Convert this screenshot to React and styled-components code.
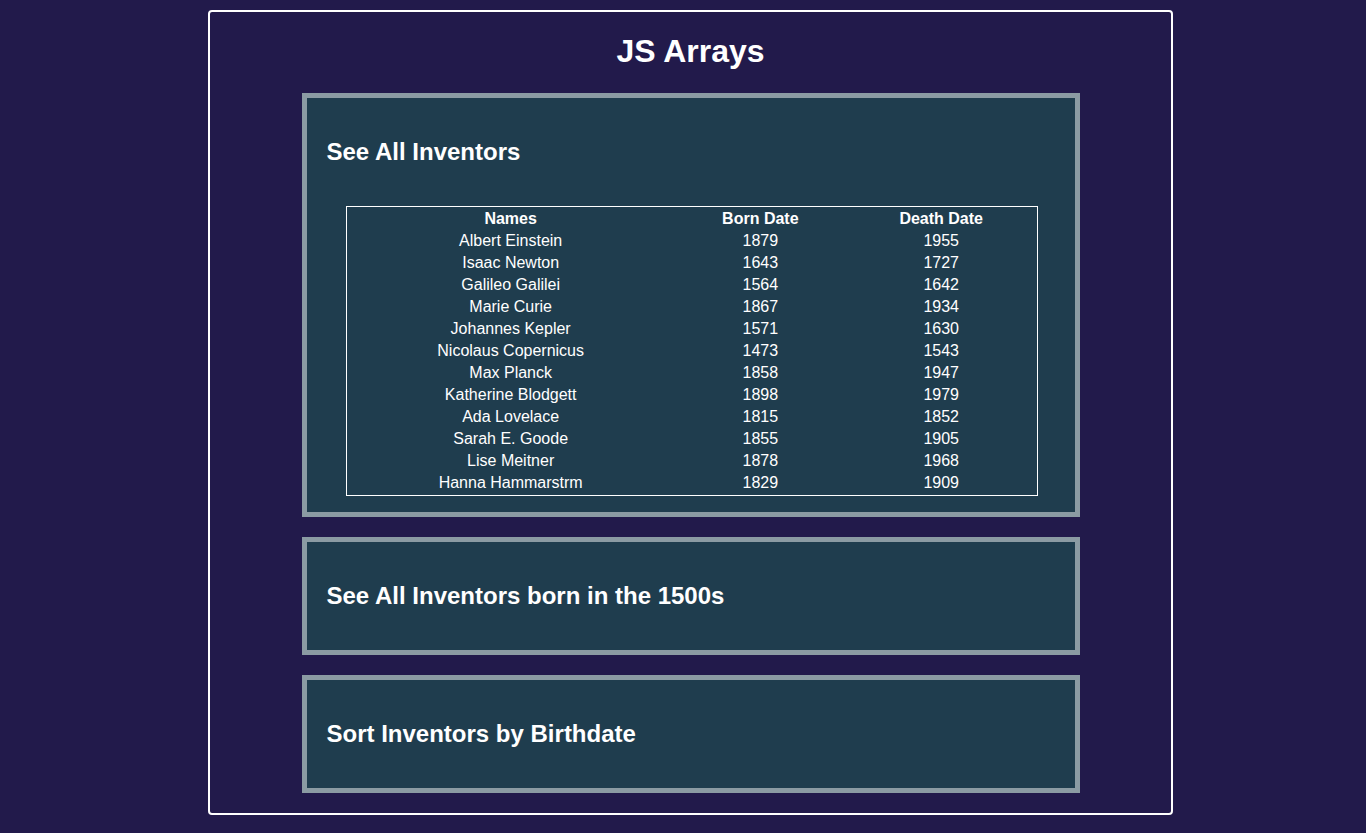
import React from "react";
import styled, { createGlobalStyle } from "styled-components";

const GlobalStyle = createGlobalStyle`
  html, body {
    margin: 0;
    padding: 0;
    background: #221a4b;
    font-family: "Liberation Sans", Arial, sans-serif;
    color: #ffffff;
  }
`;

const Page = styled.div`
  padding-top: 10px;
  padding-left: 208px;
`;

const Frame = styled.main`
  box-sizing: border-box;
  width: 965px;
  border: 2px solid #ffffff;
  border-radius: 4px;
  padding: 0 0 20px;
  display: flex;
  flex-direction: column;
  align-items: center;
`;

const Title = styled.h1`
  margin: 21px 0 23px;
  font-size: 32px;
  font-weight: 700;
  line-height: normal;
  text-align: center;
`;

const Cards = styled.div`
  display: flex;
  flex-direction: column;
  gap: 20px;
  width: 778px;
`;

const Card = styled.section`
  box-sizing: border-box;
  width: 100%;
  background: #1f3d4e;
  border: 5px solid #8b9ba3;
  padding: 20px;
  display: flow-root;
`;

const CardTitle = styled.h2`
  margin: 20px 0;
  font-size: 24px;
  font-weight: 700;
  line-height: normal;
`;

const Table = styled.table`
  width: 692px;
  margin: 40px 0 -4px 19px;
  border: 1px solid #ffffff;
  font-size: 16px;
  color: #ffffff;
  text-align: center;
`;

const Th = styled.th`
  font-weight: 700;
  padding: 1px;
`;

const Td = styled.td`
  padding: 1px;
`;

const inventors = [
  ["Albert Einstein", 1879, 1955],
  ["Isaac Newton", 1643, 1727],
  ["Galileo Galilei", 1564, 1642],
  ["Marie Curie", 1867, 1934],
  ["Johannes Kepler", 1571, 1630],
  ["Nicolaus Copernicus", 1473, 1543],
  ["Max Planck", 1858, 1947],
  ["Katherine Blodgett", 1898, 1979],
  ["Ada Lovelace", 1815, 1852],
  ["Sarah E. Goode", 1855, 1905],
  ["Lise Meitner", 1878, 1968],
  ["Hanna Hammarstrm", 1829, 1909],
];

export default function App() {
  return (
    <>
      <GlobalStyle />
      <Page>
        <Frame>
          <Title>JS Arrays</Title>
          <Cards>
            <Card>
              <CardTitle>See All Inventors</CardTitle>
              <Table>
                <thead>
                  <tr>
                    <Th>Names</Th>
                    <Th>Born Date</Th>
                    <Th>Death Date</Th>
                  </tr>
                </thead>
                <tbody>
                  {inventors.map(([name, born, died]) => (
                    <tr key={name}>
                      <Td>{name}</Td>
                      <Td>{born}</Td>
                      <Td>{died}</Td>
                    </tr>
                  ))}
                </tbody>
              </Table>
            </Card>
            <Card>
              <CardTitle>See All Inventors born in the 1500s</CardTitle>
            </Card>
            <Card>
              <CardTitle>Sort Inventors by Birthdate</CardTitle>
            </Card>
          </Cards>
        </Frame>
      </Page>
    </>
  );
}
